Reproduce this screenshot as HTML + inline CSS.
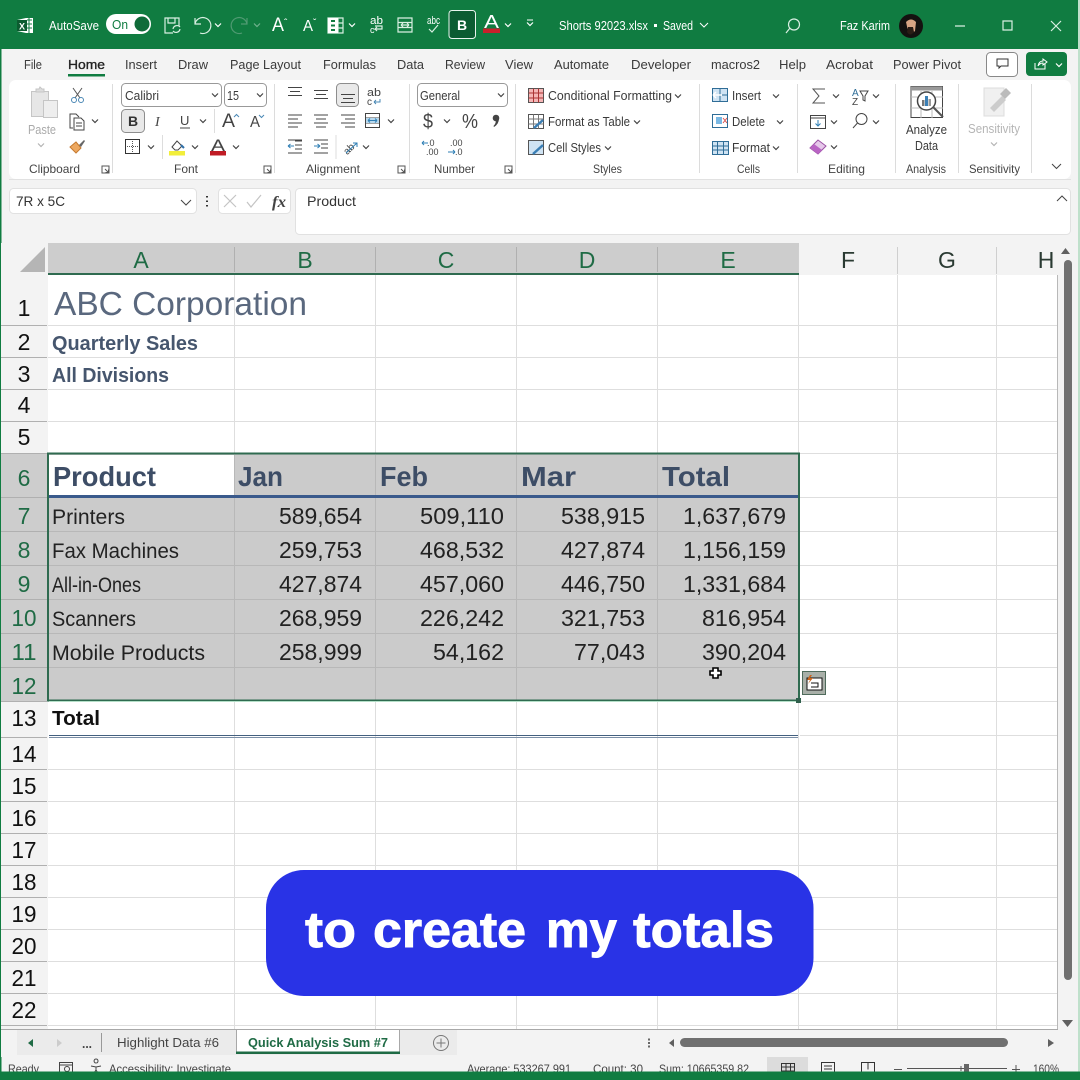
<!DOCTYPE html>
<html lang="en"><head><meta charset="utf-8"><title>Excel</title>
<style>
html,body{margin:0;padding:0;background:#fff;width:1080px;height:1080px;overflow:hidden}
svg{display:block;font-family:"Liberation Sans",sans-serif}
.t{font-size:13px;fill:#3a3a3a}
.w{font-size:13px;fill:#fff}
.l{font-size:12px;fill:#444}
.n{font-size:23px;fill:#222}
.p{font-size:21px;fill:#222}
.r{font-size:23px;fill:#111;text-anchor:middle}
.c{font-size:23px;fill:#1f6b45;text-anchor:middle}
.h{font-size:27.5px;font-weight:bold;fill:#3d4d66}
.s{font-size:13px;fill:#444}
.b{font-size:50px;font-weight:bold;fill:#fff;stroke:#fff;stroke-width:.9px}
</style></head><body>
<svg width="1080" height="1080" viewBox="0 0 1080 1080" xmlns="http://www.w3.org/2000/svg">
<defs>
<path id="ch" d="M-3 -1.5L0 1.5L3 -1.5" fill="none" stroke="#444" stroke-width="1.2"/>
<path id="cw" d="M-3 -1.5L0 1.5L3 -1.5" fill="none" stroke="#fff" stroke-width="1.2"/>
<path id="la" d="M0 0h7v7h-7zM3 3l3.5 3.5M6.5 3.5v3h-3" fill="none" stroke="#555" stroke-width="1"/>
</defs>
<!-- base -->
<rect width="1080" height="1080" fill="#f3f3f3"/>
<rect x="0" y="0" width="1080" height="49" fill="#107c41"/>
<rect x="0" y="0" width="1.5" height="1080" fill="#107c41"/>
<rect x="1078" y="0" width="2" height="1080" fill="#bfe0cb"/>
<!-- title bar -->
<path d="M17 20l9-2h7v15h-7l-9-2z" fill="#fff"/><rect x="17" y="20" width="10" height="11" fill="#0c5c30"/><path d="M27 20h5M27 24h5M27 28h5M29 18v15" stroke="#107c41" stroke-width="1"/>
<text x="19" y="29.500" font-size="9" font-weight="bold" fill="#fff">X</text>
<text class="w" x="49" y="30" textLength="50" lengthAdjust="spacingAndGlyphs">AutoSave</text>
<rect x="106" y="14" width="45" height="20" rx="10" fill="#fff"/>
<text x="112" y="29" font-size="13" fill="#107c41" textLength="16" lengthAdjust="spacingAndGlyphs">On</text>
<circle cx="142" cy="24" r="7.500" fill="#0f6b39"/>
<g fill="none" stroke="#d9efe2" stroke-width="1.200">
<path d="M173 33h-8v-15h14v8M168 18v5h7v-5"/><path d="M173 29a4 4 0 0 1 7-2M180 29a4 4 0 0 1-7 2"/>
<path d="M195 18v6h6M195 24a8 8 0 1 1 5 9"/>
<path d="M247 18v6h-6M247 24a8 8 0 1 0-5 9" stroke="#4f9a72"/>
<path d="M398 18h14v14h-14zM398 22.500h14M398 27.500h14M401 25h8M401 25l2-2M401 25l2 2M409 25l-2-2M409 25l-2 2"/>
<path d="M328 18h15v15h-15zM338 18v15M338 23h5M338 28h5"/>
<path d="M375 26h7v3h-7l2-2M375 29l2 2"/>
<path d="M429 29l3 3 6-7"/>
<path d="M786 33l4-5"/><circle cx="794" cy="24.500" r="5.500"/>
<path d="M955 26h10M1003 21h9v9h-9zM1051 21l10 10M1061 21l-10 10"/>
</g>
<path d="M328 18h10v15h-10z" fill="#fff"/><path d="M331 20h4v2h-4zM331 24.500h4v2h-4zM331 29h4v2h-4z" fill="#107c41"/>
<use href="#cw" x="218" y="25"/><g opacity=".4"><use href="#cw" x="257" y="25"/></g><use href="#cw" x="352" y="25"/><use href="#cw" x="508" y="25"/><use href="#cw" x="530" y="24"/><path d="M527 20h6" stroke="#fff"/>
<text x="272" y="31" font-size="19" fill="#fff" textLength="12" lengthAdjust="spacingAndGlyphs">A</text><text x="284" y="26" font-size="10" fill="#fff">ˆ</text>
<text x="303" y="31" font-size="16" fill="#fff" textLength="10" lengthAdjust="spacingAndGlyphs">A</text><text x="313" y="26" font-size="10" fill="#fff">ˇ</text>
<text x="370" y="24" font-size="11" fill="#fff" textLength="13" lengthAdjust="spacingAndGlyphs">ab</text><text x="370" y="33" font-size="9" fill="#fff">c</text>
<text x="427" y="24" font-size="11" fill="#fff" textLength="13" lengthAdjust="spacingAndGlyphs">abc</text>
<rect x="449" y="10.500" width="26.500" height="28" rx="3" fill="#0b5c32" stroke="#e9f4ee"/>
<text x="457" y="30" font-size="14" font-weight="bold" fill="#fff">B</text>
<text x="484" y="28" font-size="18" fill="#fff" textLength="15" lengthAdjust="spacingAndGlyphs">A</text><rect x="483" y="28.500" width="17" height="4.500" fill="#c8202b"/>
<text class="w" x="559" y="30" font-size="12" textLength="89" lengthAdjust="spacingAndGlyphs">Shorts 92023.xlsx</text><rect x="654" y="24" width="3" height="3" fill="#fff"/>
<text class="w" x="663" y="30" textLength="30" lengthAdjust="spacingAndGlyphs">Saved</text><path d="M700 23l4 4 4-4" fill="none" stroke="#fff"/>
<text class="w" x="840" y="30" textLength="50" lengthAdjust="spacingAndGlyphs">Faz Karim</text>
<circle cx="911" cy="26" r="12" fill="#141210"/><path d="M906 22q5-5 10 0l-1 9q-4 4-7 0z" fill="#d8a584"/><path d="M907 32q3 5 7 0l-1-5h-5z" fill="#2a1d16"/>
<!-- tabs -->
<g>
<text class="t" x="24" y="69" textLength="18" lengthAdjust="spacingAndGlyphs">File</text>
<text class="t" x="68" y="69" textLength="37" lengthAdjust="spacingAndGlyphs" style="fill:#222;stroke:#222;stroke-width:.35px">Home</text>
<rect x="68" y="74" width="37" height="2.500" fill="#107c41"/>
<text class="t" x="125" y="69" textLength="32" lengthAdjust="spacingAndGlyphs">Insert</text>
<text class="t" x="178" y="69" textLength="30" lengthAdjust="spacingAndGlyphs">Draw</text>
<text class="t" x="230" y="69" textLength="71" lengthAdjust="spacingAndGlyphs">Page Layout</text>
<text class="t" x="323" y="69" textLength="53" lengthAdjust="spacingAndGlyphs">Formulas</text>
<text class="t" x="397" y="69" textLength="27" lengthAdjust="spacingAndGlyphs">Data</text>
<text class="t" x="445" y="69" textLength="40" lengthAdjust="spacingAndGlyphs">Review</text>
<text class="t" x="505" y="69" textLength="28" lengthAdjust="spacingAndGlyphs">View</text>
<text class="t" x="554" y="69" textLength="55" lengthAdjust="spacingAndGlyphs">Automate</text>
<text class="t" x="631" y="69" textLength="60" lengthAdjust="spacingAndGlyphs">Developer</text>
<text class="t" x="711" y="69" textLength="49" lengthAdjust="spacingAndGlyphs">macros2</text>
<text class="t" x="779" y="69" textLength="27" lengthAdjust="spacingAndGlyphs">Help</text>
<text class="t" x="826" y="69" textLength="47" lengthAdjust="spacingAndGlyphs">Acrobat</text>
<text class="t" x="893" y="69" textLength="68" lengthAdjust="spacingAndGlyphs">Power Pivot</text>
</g>
<rect x="986.500" y="52.500" width="31" height="24" rx="4" fill="#fff" stroke="#888"/>
<path d="M997 59h11v7h-7l-2 2v-2h-2z" fill="none" stroke="#333"/>
<rect x="1026" y="52" width="41" height="24" rx="4" fill="#107c41"/>
<path d="M1035 63v6h10v-5M1038 66q1-5 5-5v-2l4 3-4 3v-2q-3 0-5 3" fill="none" stroke="#fff"/><use href="#cw" x="1059" y="65"/>
<!-- ribbon card -->
<rect x="9" y="80" width="1062" height="99" rx="7" fill="#fff"/>
<path d="M9 179.500h1062" stroke="#d0d0d0" opacity=".5"/>
<path d="M112.500 84v89M274.500 84v89M409.500 84v89M515.500 84v89M699.500 84v89M797.500 84v89M895.500 84v89M958.500 84v89M1031.500 84v89" stroke="#dcdcdc"/>
<!-- clipboard -->
<path d="M31.500 91.500h17v25h-17z" fill="#e6e6e6" stroke="#c5c5c5"/><path d="M36 91v-2h3l1-2 2 2h2v3h-8z" fill="#ddd" stroke="#c5c5c5"/><rect x="43.500" y="100.500" width="14" height="17" fill="#eee" stroke="#c5c5c5"/>
<text x="28" y="134" font-size="13" fill="#aaa" textLength="28" lengthAdjust="spacingAndGlyphs">Paste</text>
<g opacity=".4"><use href="#ch" x="41" y="145"/></g>
<path d="M73 88l7 10M82 88l-7 10" fill="none" stroke="#555"/><circle cx="74" cy="100" r="2.500" fill="none" stroke="#4a88b5"/><circle cx="81" cy="100" r="2.500" fill="none" stroke="#4a88b5"/>
<path d="M73 128h-3v-14h6l3 3M74 118h7l3 3v9h-10zM76 123h6M76 126h6" fill="none" stroke="#444"/><use href="#ch" x="95" y="121"/>
<path d="M70 147l6-5 5 6-5 5z" fill="#eda860" stroke="#c67a2f"/><path d="M79 145l5-5 1 1-4 6z" fill="#666"/>
<text class="l" x="29" y="173" textLength="51" lengthAdjust="spacingAndGlyphs">Clipboard</text><use href="#la" x="102" y="166"/>
<!-- font -->
<rect x="121.500" y="83.500" width="100" height="23" rx="4" fill="#fff" stroke="#999"/>
<text class="t" x="125" y="100" textLength="34" lengthAdjust="spacingAndGlyphs">Calibri</text><use href="#ch" x="215" y="95"/>
<rect x="224.500" y="83.500" width="42" height="23" rx="4" fill="#fff" stroke="#999"/>
<text class="t" x="227" y="100" textLength="12" lengthAdjust="spacingAndGlyphs">15</text><use href="#ch" x="260" y="95"/>
<rect x="121.500" y="109.500" width="23" height="23" rx="4" fill="#e9e9e9" stroke="#8d8d8d"/>
<text x="128" y="126" font-size="14" font-weight="bold" fill="#333">B</text>
<text x="155" y="126" font-size="14" font-style="italic" fill="#444" font-family="Liberation Serif">I</text>
<text x="180" y="125" font-size="13" fill="#444">U</text><path d="M180 128h10" stroke="#444"/><use href="#ch" x="203" y="121"/>
<path d="M214.500 109v24" stroke="#ddd"/>
<text x="222" y="127" font-size="19" fill="#444" textLength="13" lengthAdjust="spacingAndGlyphs">A</text><path d="M234 117l2.500-2.500 2.500 2.500" fill="none" stroke="#4a88b5"/>
<text x="250" y="127" font-size="16" fill="#444" textLength="10" lengthAdjust="spacingAndGlyphs">A</text><path d="M259 115l2.500 2.500 2.500-2.500" fill="none" stroke="#4a88b5"/>
<rect x="125.500" y="139.500" width="14" height="14" fill="#fff" stroke="#333"/><path d="M132.500 141v11M127 146.500h11" stroke="#555" stroke-dasharray="1 1"/><use href="#ch" x="151" y="147"/>
<path d="M162.500 135v24" stroke="#ddd"/>
<path d="M172 147l5-6 5 5-4 4h-3z" fill="none" stroke="#444"/><path d="M181 145l3 3" stroke="#2f6fa8" stroke-width="2"/><rect x="169" y="151" width="16" height="4.500" fill="#f2ee3a"/><use href="#ch" x="195" y="147"/>
<text x="211" y="151" font-size="17" fill="#444" textLength="14" lengthAdjust="spacingAndGlyphs">A</text><rect x="210" y="151" width="16" height="4.500" fill="#c01c25"/><use href="#ch" x="236" y="147"/>
<text class="l" x="174" y="173" textLength="24" lengthAdjust="spacingAndGlyphs">Font</text><use href="#la" x="264" y="166"/>
<!-- alignment -->
<rect x="336.500" y="83.500" width="22" height="23" rx="4" fill="#e9e9e9" stroke="#8d8d8d"/>
<path d="M288 87.500h14M290 91.500h10M288 95.500h14M314 90.500h14M316 94.500h10M314 98.500h14M341 94.500h14M343 98.500h10M341 102.500h14" stroke="#444" fill="none"/>
<path d="M288 115h14M288 119h10M288 123h14M288 127h10M314 115h14M316 119h10M314 123h14M316 127h10M341 115h14M345 119h10M341 123h14M345 127h10" stroke="#444" fill="none"/>
<text x="367" y="96" font-size="11" fill="#444" textLength="14" lengthAdjust="spacingAndGlyphs">ab</text><text x="367" y="105" font-size="10" fill="#444">c</text><path d="M380 99v3h-6M374 102l2-2M374 102l2 2" stroke="#4a88b5" fill="none"/>
<path d="M365.500 113.500h14v14h-14zM365.500 118h14M365.500 123h14" fill="#fff" stroke="#444"/><rect x="366" y="118" width="13" height="5" fill="#b9d9ee"/><path d="M368 120.500h9M368 120.500l2-2M368 120.500l2 2M377 120.500l-2-2M377 120.500l-2 2" stroke="#2f7fb5" fill="none"/><use href="#ch" x="391" y="121"/>
<path d="M295 141h7M295 145h7M295 149h7M288 153h14M288 140h14" stroke="#444" fill="none"/><path d="M294 146h-6M288 146l2.500-2M288 146l2.500 2" stroke="#2f7fb5" fill="none"/>
<path d="M314 140h14M321 144h7M321 148h7M314 153h14" stroke="#444" fill="none"/><path d="M314 146h6M320 146l-2.500-2M320 146l-2.500 2" stroke="#2f7fb5" fill="none"/>
<path d="M336 135v24" stroke="#ddd"/>
<text x="342" y="152" font-size="10" fill="#444" transform="rotate(-45 348 146) translate(-1 0)">ab</text><path d="M346 153l11-10M353 143h4v4" stroke="#2f7fb5" fill="none"/><use href="#ch" x="366" y="147"/>
<text class="l" x="306" y="173" textLength="54" lengthAdjust="spacingAndGlyphs">Alignment</text><use href="#la" x="398" y="166"/>
<!-- number -->
<rect x="417.500" y="83.500" width="90" height="23" rx="4" fill="#fff" stroke="#999"/>
<text class="t" x="420" y="100" textLength="40" lengthAdjust="spacingAndGlyphs">General</text><use href="#ch" x="501" y="95"/>
<text x="423" y="128" font-size="20" fill="#444" textLength="10" lengthAdjust="spacingAndGlyphs">$</text><use href="#ch" x="447" y="121"/>
<text x="462" y="128" font-size="20" fill="#444" textLength="16" lengthAdjust="spacingAndGlyphs">%</text>
<circle cx="496" cy="118" r="3.300" fill="#444"/><path d="M499 118q0 6-5 9l-.5-1q3-3 2-6z" fill="#444"/>
<text x="427" y="146" font-size="9" fill="#444">.0</text><text x="426" y="155" font-size="9" fill="#444">.00</text><path d="M428 143h-6M422 143l2-2M422 143l2 2" stroke="#2f7fb5" fill="none"/>
<text x="450" y="146" font-size="9" fill="#444">.00</text><text x="455" y="155" font-size="9" fill="#444">.0</text><path d="M448 152h7M455 152l-2-2M455 152l-2 2" stroke="#2f7fb5" fill="none"/>
<text class="l" x="434" y="173" textLength="41" lengthAdjust="spacingAndGlyphs">Number</text><use href="#la" x="505" y="166"/>
<!-- styles -->
<rect x="528.500" y="88.500" width="15" height="14" fill="#f5b5b5" stroke="#555"/><path d="M528.500 93h15M528.500 98h15M533.500 88.500v14M538.500 88.500v14" stroke="#a33" fill="none"/>
<rect x="528.500" y="114.500" width="15" height="14" fill="#fff" stroke="#555"/><path d="M528.500 119h15M528.500 124h15M533.500 114.500v14M538.500 114.500v14" stroke="#777" fill="none"/><path d="M534 128l9-8" stroke="#3b7fb5" stroke-width="2.500"/>
<rect x="528.500" y="140.500" width="15" height="14" fill="#cfe3f3" stroke="#555"/><path d="M533 154l10-9" stroke="#3b7fb5" stroke-width="2.500"/>
<text class="t" x="548" y="100" textLength="124" lengthAdjust="spacingAndGlyphs">Conditional Formatting</text><use href="#ch" x="678" y="96"/>
<text class="t" x="548" y="126" textLength="82" lengthAdjust="spacingAndGlyphs">Format as Table</text><use href="#ch" x="637" y="122"/>
<text class="t" x="548" y="152" textLength="53" lengthAdjust="spacingAndGlyphs">Cell Styles</text><use href="#ch" x="608" y="148"/>
<text class="l" x="593" y="173" textLength="29" lengthAdjust="spacingAndGlyphs">Styles</text>
<!-- cells -->
<rect x="712.500" y="88.500" width="15" height="13" fill="#cfe3f3" stroke="#2f6d97"/><path d="M712.500 95h15M720 88.500v13" stroke="#2f6d97" fill="none"/><path d="M713 95h9M713 95l3-3M713 95l3 3" stroke="#fff" stroke-width="1.500" fill="none"/>
<rect x="712.500" y="114.500" width="15" height="13" fill="#fff" stroke="#2f6d97"/><rect x="716" y="117" width="6" height="7" fill="#7ab8e3"/><path d="M723 118l4 5M727 118l-4 5" stroke="#d9534f" fill="none"/>
<rect x="712.500" y="141.500" width="16" height="13" fill="#cfe3f3" stroke="#2f6d97"/><path d="M712.500 146h16M712.500 150h16M717.500 141.500v13M723.500 141.500v13" stroke="#2f6d97" fill="none"/>
<text class="t" x="732" y="100" textLength="29" lengthAdjust="spacingAndGlyphs">Insert</text><use href="#ch" x="776" y="96"/>
<text class="t" x="732" y="126" textLength="33" lengthAdjust="spacingAndGlyphs">Delete</text><use href="#ch" x="780" y="122"/>
<text class="t" x="732" y="152" textLength="38" lengthAdjust="spacingAndGlyphs">Format</text><use href="#ch" x="776" y="148"/>
<text class="l" x="737" y="173" textLength="23" lengthAdjust="spacingAndGlyphs">Cells</text>
<!-- editing -->
<path d="M825 89h-12l6 7-6 7h12" fill="none" stroke="#555"/><use href="#ch" x="836" y="96"/>
<text x="852" y="96" font-size="10" fill="#2f6d97">A</text><text x="852" y="105" font-size="10" fill="#444">Z</text><path d="M860 91h8l-3 5v5l-2-1v-4z" fill="none" stroke="#444"/><use href="#ch" x="876" y="96"/>
<rect x="810.500" y="115.500" width="15" height="13" fill="#fff" stroke="#444"/><path d="M810 118h16" stroke="#444"/><path d="M818 120v6M815.500 123.500l2.500 2.500 2.500-2.500" fill="none" stroke="#2f7fb5"/><use href="#ch" x="834" y="122"/>
<circle cx="861.500" cy="119" r="5.500" fill="none" stroke="#444"/><path d="M857.500 123l-4.500 5" stroke="#444"/><use href="#ch" x="876" y="122"/>
<path d="M810 148l8-8 8 6-8 8z" fill="#e6c8ea" stroke="#9a4fa3"/><path d="M810 148l4-4 8 6-4 4z" fill="#b964c4"/><use href="#ch" x="834" y="147"/>
<text class="l" x="828" y="173" textLength="37" lengthAdjust="spacingAndGlyphs">Editing</text>
<!-- analyze -->
<rect x="911" y="86.500" width="31.500" height="31" fill="#fff" stroke="#444"/><rect x="911" y="86.500" width="31.500" height="4" fill="#999"/><path d="M911 97h32M911 108h32M921 91v27M932 91v27" stroke="#bbb"/><circle cx="926.500" cy="101" r="9" fill="#fff" stroke="#444" stroke-width="1.500"/><rect x="922" y="100" width="2.500" height="6" fill="#777"/><rect x="925" y="96" width="3" height="10" fill="#3b7fb5"/><rect x="928.500" y="99" width="2.500" height="7" fill="#999"/><path d="M933 107l10 10" stroke="#555" stroke-width="2"/>
<text class="t" x="906" y="134" textLength="41" lengthAdjust="spacingAndGlyphs">Analyze</text><text class="t" x="915" y="150" textLength="23" lengthAdjust="spacingAndGlyphs">Data</text>
<text class="l" x="906" y="173" textLength="40" lengthAdjust="spacingAndGlyphs">Analysis</text>
<!-- sensitivity -->
<rect x="984" y="88" width="20" height="28" fill="#f0f0f0" stroke="#ddd"/><path d="M990 108l12-12 4 4-12 12z" fill="#ccc"/><path d="M1000 94l6-6 5 5-6 6z" fill="#bbb"/>
<text x="968" y="133" font-size="13" fill="#b5b5b5" textLength="52" lengthAdjust="spacingAndGlyphs">Sensitivity</text><g opacity=".4"><use href="#ch" x="994" y="144"/></g>
<text class="l" x="969" y="173" textLength="51" lengthAdjust="spacingAndGlyphs">Sensitivity</text>
<path d="M1052 164l4.500 4.500 4.500-4.500" fill="none" stroke="#444"/>
<!-- formula bar -->
<rect x="9.500" y="188.500" width="187" height="25" rx="4" fill="#fff" stroke="#e1e1e1"/>
<text x="16" y="206" font-size="14" fill="#333" textLength="49" lengthAdjust="spacingAndGlyphs">7R x 5C</text><path d="M181 200l5 5 5-5" fill="none" stroke="#444"/>
<path d="M207 196v1.500M207 200.500v1.500M207 205v1.500" stroke="#333" stroke-width="2"/>
<rect x="218.500" y="188.500" width="72" height="25" rx="4" fill="#fff" stroke="#e1e1e1"/>
<path d="M224 195l12 12M236 195l-12 12M247 202l4 5 10-12" fill="none" stroke="#c4c4c4" stroke-width="1.200"/>
<text x="272" y="207" font-size="16" font-style="italic" font-weight="bold" fill="#444" font-family="Liberation Serif" textLength="14" lengthAdjust="spacingAndGlyphs">fx</text>
<rect x="295.500" y="188.500" width="775" height="46" rx="4" fill="#fff" stroke="#e1e1e1"/>
<text x="307" y="206" font-size="14" fill="#333" textLength="49" lengthAdjust="spacingAndGlyphs">Product</text>
<path d="M1057 201l5-5 5 5" fill="none" stroke="#444"/>
<!-- sheet -->
<rect x="1" y="243" width="1058" height="787" fill="#f3f3f3"/>
<rect x="48" y="275" width="1010" height="754" fill="#fff"/>
<rect x="48" y="243" width="751" height="32" fill="#cdcdcd"/>
<rect x="1" y="453" width="47" height="248" fill="#cdcdcd"/>
<path d="M45 247v25h-25z" fill="#b5b5b5"/>
<rect x="49" y="454" width="749" height="246" fill="#cbcbcb"/>
<rect x="49" y="455" width="185" height="40" fill="#fff"/>
<!-- grid -->
<path d="M234.500 275V453M375.500 275V453M516.500 275V453M657.500 275V453M798.500 275V1029M897.500 275V1029M996.500 275V1029M234.500 701V1029M375.500 701V1029M516.500 701V1029M657.500 701V1029M48 325.500H1058M48 357.500H1058M48 389.500H1058M48 421.500H1058M48 453.500H1058M800 497.500H1058M800 531.500H1058M800 565.500H1058M800 599.500H1058M800 633.500H1058M800 667.500H1058M48 701.500H1058M800 735.500H1058M48 769.500H1058M48 801.500H1058M48 833.500H1058M48 865.500H1058M48 897.500H1058M48 929.500H1058M48 961.500H1058M48 993.500H1058M48 1025.500H1058" stroke="#dedede" fill="none"/>
<path d="M1057.500 275V1029M48 1029.500H1058" stroke="#b8b8b8" fill="none"/>
<path d="M234.500 455V700M375.500 455V700M516.500 455V700M657.500 455V700M49 531.500H798M49 565.500H798M49 599.500H798M49 633.500H798M49 667.500H798" stroke="#b8b8b8" fill="none"/>
<!-- headers -->
<path d="M234.500 247V272M375.500 247V272M516.500 247V272M657.500 247V272" stroke="#b0b0b0"/>
<path d="M798.500 247V274M897.500 247V274M996.500 247V274" stroke="#cfcfcf"/>
<path d="M1 325.500H47M1 357.500H47M1 389.500H47M1 421.500H47M1 453.500H47M1 497.500H47M1 531.500H47M1 565.500H47M1 599.500H47M1 633.500H47M1 667.500H47M1 701.500H47M1 737.500H47M1 769.500H47M1 801.500H47M1 833.500H47M1 865.500H47M1 897.500H47M1 929.500H47M1 961.500H47M1 993.500H47M1 1025.500H47" stroke="#b0b0b0"/>
<rect x="48" y="273" width="751" height="2" fill="#2f6b50"/>
<rect x="47" y="453" width="1.500" height="248" fill="#2f6b50"/>
<text class="c" x="141" y="268">A</text><text class="c" x="305" y="268">B</text><text class="c" x="446" y="268">C</text><text class="c" x="587" y="268">D</text><text class="c" x="728" y="268">E</text>
<text class="r" x="848" y="268" style="fill:#2a3a32">F</text><text class="r" x="947" y="268" style="fill:#2a3a32">G</text><text class="r" x="1046" y="268" style="fill:#2a3a32">H</text>
<text class="r" x="24" y="316">1</text><text class="r" x="24" y="350">2</text><text class="r" x="24" y="382">3</text><text class="r" x="24" y="413">4</text><text class="r" x="24" y="445">5</text>
<text class="c" x="24" y="486">6</text><text class="c" x="24" y="524">7</text><text class="c" x="24" y="558">8</text><text class="c" x="24" y="592">9</text><text class="c" x="24" y="626" textLength="25" lengthAdjust="spacingAndGlyphs">10</text><text class="c" x="24" y="660" textLength="25" lengthAdjust="spacingAndGlyphs">11</text><text class="c" x="24" y="694" textLength="25" lengthAdjust="spacingAndGlyphs">12</text>
<text class="r" x="24" y="726" textLength="25" lengthAdjust="spacingAndGlyphs">13</text><text class="r" x="24" y="762" textLength="25" lengthAdjust="spacingAndGlyphs">14</text><text class="r" x="24" y="794" textLength="25" lengthAdjust="spacingAndGlyphs">15</text><text class="r" x="24" y="826" textLength="25" lengthAdjust="spacingAndGlyphs">16</text><text class="r" x="24" y="858" textLength="25" lengthAdjust="spacingAndGlyphs">17</text><text class="r" x="24" y="890" textLength="25" lengthAdjust="spacingAndGlyphs">18</text><text class="r" x="24" y="922" textLength="25" lengthAdjust="spacingAndGlyphs">19</text><text class="r" x="24" y="954" textLength="25" lengthAdjust="spacingAndGlyphs">20</text><text class="r" x="24" y="986" textLength="25" lengthAdjust="spacingAndGlyphs">21</text><text class="r" x="24" y="1018" textLength="25" lengthAdjust="spacingAndGlyphs">22</text>
<!-- cells -->
<text x="54" y="315" font-size="33" fill="#5a687e" textLength="253" lengthAdjust="spacingAndGlyphs">ABC Corporation</text>
<text x="52" y="350" font-size="20" font-weight="bold" fill="#46566e" textLength="146" lengthAdjust="spacingAndGlyphs">Quarterly Sales</text>
<text x="52" y="382" font-size="20" font-weight="bold" fill="#46566e" textLength="117" lengthAdjust="spacingAndGlyphs">All Divisions</text>
<text class="h" x="53" y="486" textLength="103" lengthAdjust="spacingAndGlyphs">Product</text><text class="h" x="238" y="486" textLength="45" lengthAdjust="spacingAndGlyphs">Jan</text><text class="h" x="380" y="486" textLength="48" lengthAdjust="spacingAndGlyphs">Feb</text><text class="h" x="521" y="486" textLength="55" lengthAdjust="spacingAndGlyphs">Mar</text><text class="h" x="662" y="486" textLength="68" lengthAdjust="spacingAndGlyphs">Total</text>
<rect x="49" y="495" width="749" height="3" fill="#3a5a8c"/>
<text class="p" x="52" y="524" textLength="73" lengthAdjust="spacingAndGlyphs">Printers</text><text class="n" x="279" y="524" textLength="83" lengthAdjust="spacingAndGlyphs">589,654</text><text class="n" x="420" y="524" textLength="84" lengthAdjust="spacingAndGlyphs">509,110</text><text class="n" x="561" y="524" textLength="84" lengthAdjust="spacingAndGlyphs">538,915</text><text class="n" x="683" y="524" textLength="103" lengthAdjust="spacingAndGlyphs">1,637,679</text>
<text class="p" x="52" y="558" textLength="127" lengthAdjust="spacingAndGlyphs">Fax Machines</text><text class="n" x="279" y="558" textLength="83" lengthAdjust="spacingAndGlyphs">259,753</text><text class="n" x="420" y="558" textLength="84" lengthAdjust="spacingAndGlyphs">468,532</text><text class="n" x="561" y="558" textLength="84" lengthAdjust="spacingAndGlyphs">427,874</text><text class="n" x="683" y="558" textLength="103" lengthAdjust="spacingAndGlyphs">1,156,159</text>
<text class="p" x="52" y="592" textLength="89" lengthAdjust="spacingAndGlyphs">All-in-Ones</text><text class="n" x="279" y="592" textLength="83" lengthAdjust="spacingAndGlyphs">427,874</text><text class="n" x="420" y="592" textLength="84" lengthAdjust="spacingAndGlyphs">457,060</text><text class="n" x="561" y="592" textLength="84" lengthAdjust="spacingAndGlyphs">446,750</text><text class="n" x="683" y="592" textLength="103" lengthAdjust="spacingAndGlyphs">1,331,684</text>
<text class="p" x="52" y="626" textLength="84" lengthAdjust="spacingAndGlyphs">Scanners</text><text class="n" x="279" y="626" textLength="83" lengthAdjust="spacingAndGlyphs">268,959</text><text class="n" x="420" y="626" textLength="84" lengthAdjust="spacingAndGlyphs">226,242</text><text class="n" x="561" y="626" textLength="84" lengthAdjust="spacingAndGlyphs">321,753</text><text class="n" x="702" y="626" textLength="84" lengthAdjust="spacingAndGlyphs">816,954</text>
<text class="p" x="52" y="660" textLength="153" lengthAdjust="spacingAndGlyphs">Mobile Products</text><text class="n" x="279" y="660" textLength="83" lengthAdjust="spacingAndGlyphs">258,999</text><text class="n" x="433" y="660" textLength="71" lengthAdjust="spacingAndGlyphs">54,162</text><text class="n" x="574" y="660" textLength="71" lengthAdjust="spacingAndGlyphs">77,043</text><text class="n" x="702" y="660" textLength="84" lengthAdjust="spacingAndGlyphs">390,204</text>
<text x="52" y="725" font-size="20" font-weight="bold" fill="#111" textLength="48" lengthAdjust="spacingAndGlyphs">Total</text>
<path d="M49 735.500H798" stroke="#44607f"/><path d="M49 737.500H798" stroke="#7a8ea6"/>
<!-- selection -->
<rect x="48" y="453.500" width="751" height="247" fill="none" stroke="#2f6b50" stroke-width="2"/>
<path d="M49 701.500H798" stroke="#b5dfc8"/>
<rect x="796" y="698" width="5" height="5" fill="#2f5f4c"/>
<path d="M713 668h5v3h3v4h-3v3h-5v-3h-3v-4h3z" fill="#fff" stroke="#000" stroke-width="1.600"/>
<rect x="802.500" y="671.500" width="23" height="23" fill="#a9b0a9" stroke="#4f6b5c"/>
<rect x="807" y="678" width="15" height="12" fill="#fff" stroke="#111"/><path d="M811 683h7v4h-7" fill="none" stroke="#111"/><path d="M810 675l-3 5h3l-2 4 5-6h-3l2-3z" fill="#c9651f"/>
<!-- scrollbar -->
<path d="M1061 254l4.500-6 4.500 6z" fill="#606060"/><rect x="1064" y="260" width="8" height="720" rx="4" fill="#707070"/><path d="M1062 1020h11l-5.500 7z" fill="#606060"/>
<!-- banner -->
<rect x="266" y="870" width="547.500" height="126" rx="38" fill="#2933e6"/>
<text class="b" x="305" y="947" textLength="51" lengthAdjust="spacingAndGlyphs">to</text>
<text class="b" x="373" y="947" textLength="153" lengthAdjust="spacingAndGlyphs">create</text>
<text class="b" x="546" y="947" textLength="71" lengthAdjust="spacingAndGlyphs">my</text>
<text class="b" x="633" y="947" textLength="141" lengthAdjust="spacingAndGlyphs">totals</text>
<!-- tab bar -->
<rect x="1" y="1030" width="1059" height="27" fill="#f3f3f3"/>
<rect x="17" y="1030" width="440" height="25" fill="#ebebeb"/>
<path d="M1 1029.500H1058" stroke="#a8a8a8"/>
<path d="M33 1039v8l-5-4z" fill="#1f6b45"/><path d="M57 1039v8l5-4z" fill="#ccc"/>
<text x="82" y="1048" font-size="13" font-weight="bold" fill="#444" textLength="10" lengthAdjust="spacingAndGlyphs">...</text>
<path d="M101.500 1033v19" stroke="#999"/>
<text class="s" x="117" y="1047" textLength="102" lengthAdjust="spacingAndGlyphs">Highlight Data #6</text>
<rect x="236.500" y="1029.500" width="163" height="24" fill="#fff" stroke="#a8a8a8"/><rect x="236" y="1051.500" width="164" height="2.500" fill="#1f6b45"/>
<text x="248" y="1047" font-size="13" font-weight="bold" fill="#1f6b45" textLength="140" lengthAdjust="spacingAndGlyphs">Quick Analysis Sum #7</text>
<circle cx="441" cy="1043" r="7.500" fill="none" stroke="#777"/><path d="M436.500 1043h9M441 1038.500v9" stroke="#777"/>
<path d="M649 1038.500v2M649 1042v2M649 1045.500v2" stroke="#444" stroke-width="1.600"/>
<path d="M674 1039v8l-5-4z" fill="#606060"/><rect x="680" y="1038" width="328" height="9" rx="4.500" fill="#707070"/><path d="M1048 1039v8l6-4z" fill="#606060"/>
<!-- status -->
<text x="8" y="1073" font-size="12" fill="#444" textLength="31" lengthAdjust="spacingAndGlyphs">Ready</text>
<path d="M59.500 1062.500h13v10h-13zM59.500 1065h13" fill="none" stroke="#444"/><circle cx="67" cy="1069" r="2.500" fill="none" stroke="#444"/>
<path d="M96 1063a2 2 0 1 1 .1 0M91 1066l5 1 5-1M96 1067v3M94 1073l2-3 2 3" fill="none" stroke="#444"/>
<text x="109" y="1073" font-size="12" fill="#444" textLength="122" lengthAdjust="spacingAndGlyphs">Accessibility: Investigate</text>
<text x="467" y="1073" font-size="12" fill="#444" textLength="104" lengthAdjust="spacingAndGlyphs">Average: 533267.991</text>
<text x="593" y="1073" font-size="12" fill="#444" textLength="50" lengthAdjust="spacingAndGlyphs">Count: 30</text>
<text x="659" y="1073" font-size="12" fill="#444" textLength="90" lengthAdjust="spacingAndGlyphs">Sum: 10665359.82</text>
<rect x="767" y="1057" width="41" height="16" fill="#dcdcdc"/>
<path d="M781.500 1063.500h13v10h-13zM781.500 1067h13M781.500 1071h13M786 1063v10M790.500 1063v10" fill="none" stroke="#333"/>
<path d="M821.500 1062.500h13v11h-13zM824 1066h8M824 1069h8M824 1072h8" fill="none" stroke="#333"/>
<path d="M861.500 1073v-10.500h13v10.500M868 1062.500v7" fill="none" stroke="#333"/>
<path d="M894 1069.500h8M907 1068.500h100M961 1066v5M1012 1069.500h8M1016 1065v8" stroke="#555" fill="none"/>
<rect x="964" y="1064" width="5" height="8" fill="#666"/>
<text x="1033" y="1073" font-size="12" fill="#444" textLength="26" lengthAdjust="spacingAndGlyphs">160%</text>
<rect x="0" y="1071.500" width="1080" height="8.500" fill="#107c41"/>
</svg>
</body></html>
